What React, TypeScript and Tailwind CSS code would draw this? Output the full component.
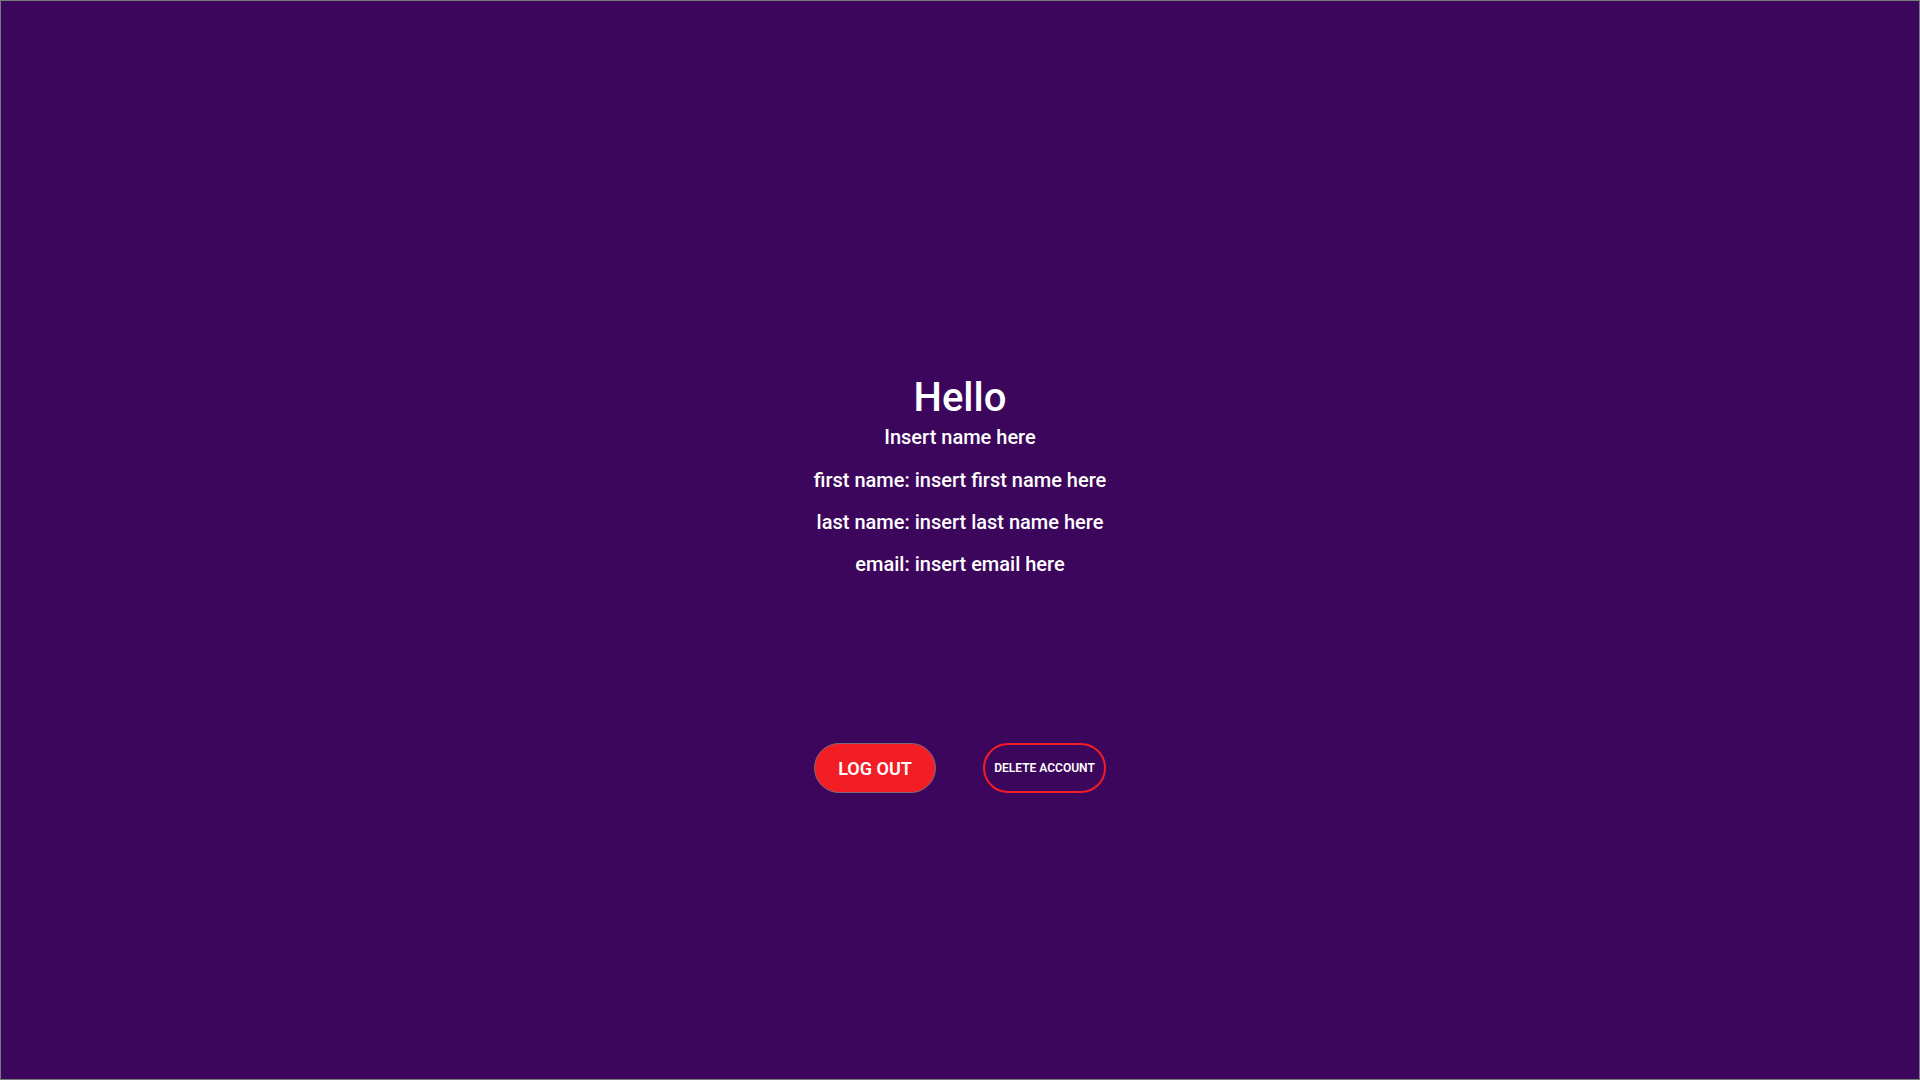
export default function App() {
  return (
    <div className="min-h-screen w-full border border-[#7a7a7a] bg-[#3c065c] font-['Roboto',sans-serif] text-white">
      <div className="flex flex-col items-center pt-[373px]">
        <h1 className="text-[40px] leading-[48px] font-medium">Hello</h1>
        <p className="mt-[1px] text-[20px] leading-[28px] font-medium">Insert name here</p>
        <div className="mt-[15px] flex flex-col items-center gap-[14px] text-[20px] leading-[28px] font-medium">
          <p>first name: insert first name here</p>
          <p>last name: insert last name here</p>
          <p>email: insert email here</p>
        </div>
        <div className="mt-[165px] flex items-center gap-[47px]">
          <button className="h-[50px] w-[122px] rounded-full border border-[#7a6a7a] bg-[#f21d25] text-[18px] font-semibold text-white">
            LOG OUT
          </button>
          <button className="h-[50px] w-[123px] rounded-full border-2 border-[#f21d25] text-[12px] font-semibold text-white">
            DELETE ACCOUNT
          </button>
        </div>
      </div>
    </div>
  )
}
